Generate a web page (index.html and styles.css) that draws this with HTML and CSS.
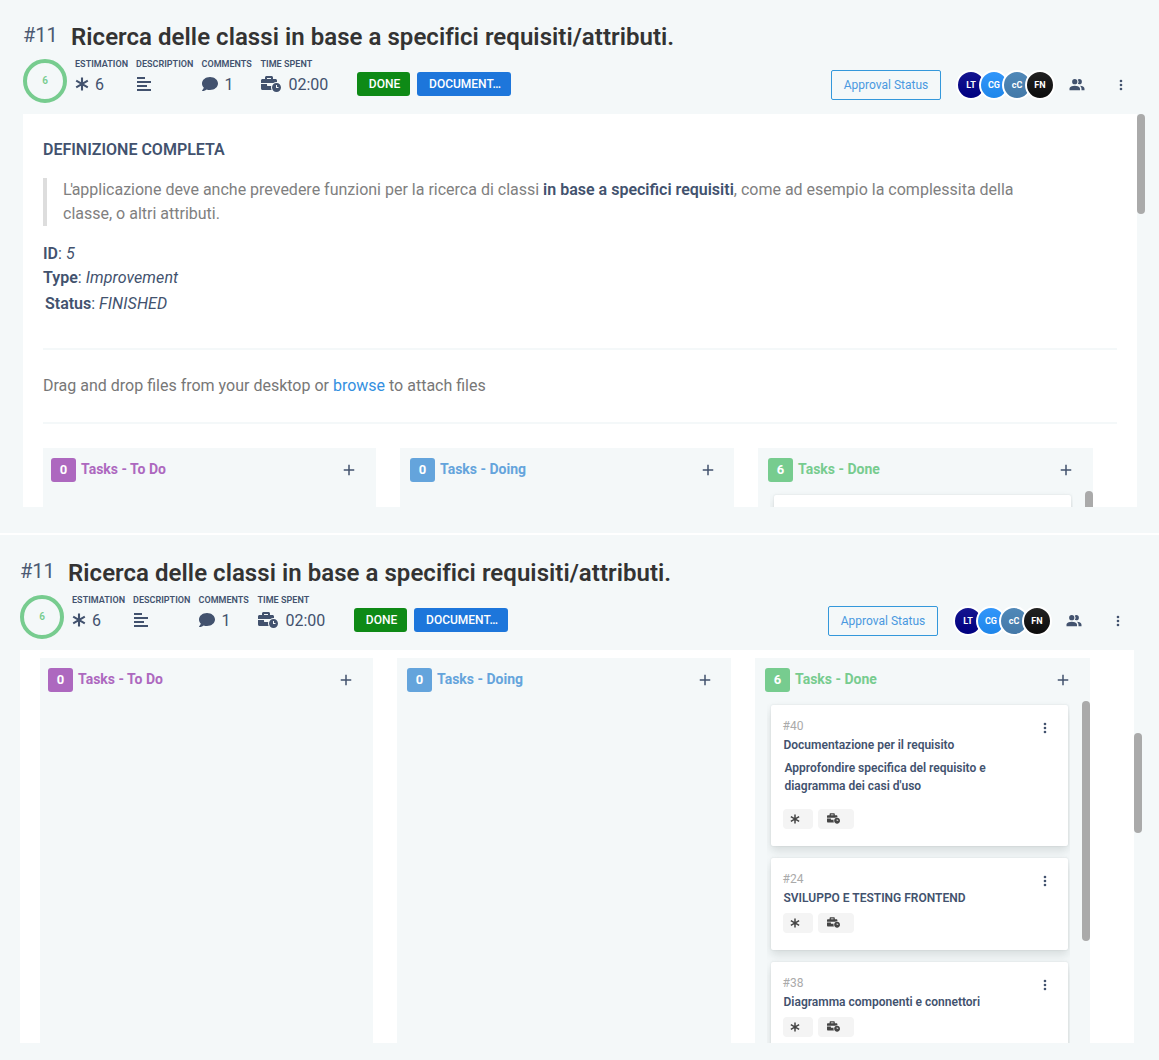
FILE: index.html
```html
<!DOCTYPE html>
<html lang="it">
<head>
<meta charset="utf-8">
<title>Ricerca delle classi in base a specifici requisiti/attributi.</title>
<link rel="stylesheet" href="styles.css">
</head>
<body>
<svg class="sprite" aria-hidden="true">
  <symbol id="i-asterisk" viewBox="0 0 14 14"><path d="M7 .6v12.8M1.2 3.7l11.6 6.6M1.2 10.3l11.6-6.6" fill="none" stroke="currentColor" stroke-width="2.1"/></symbol>
  <symbol id="i-lines" viewBox="0 0 14 14"><path d="M0 0h8v2H0zM0 4h14v2H0zM0 8h10v2H0zM0 12h14v2H0z"/></symbol>
  <symbol id="i-comment" viewBox="0 0 512 512"><path d="M256 32C114.6 32 0 125.1 0 240c0 49.6 21.4 95 57 130.7C44.5 421.1 2.7 466 2.2 466.5c-2.2 2.3-2.8 5.7-1.5 8.7S4.8 480 8 480c66.3 0 116-31.8 140.6-51.4 32.7 12.3 69 19.4 107.4 19.4 141.4 0 256-93.1 256-208S397.4 32 256 32z"/></symbol>
  <symbol id="i-time" viewBox="0 0 640 512"><path d="M496 224c-79.59 0-144 64.41-144 144s64.41 144 144 144 144-64.41 144-144-64.41-144-144-144zm64 150.29c0 5.34-4.37 9.71-9.71 9.71h-60.57c-5.34 0-9.71-4.37-9.71-9.71v-76.57c0-5.34 4.37-9.71 9.71-9.71h12.57c5.34 0 9.71 4.37 9.71 9.71V352h38.29c5.34 0 9.71 4.37 9.71 9.71v12.58zM496 192c5.4 0 10.72.33 16 .81V144c0-25.6-22.4-48-48-48h-80V48c0-25.6-22.4-48-48-48H176c-25.6 0-48 22.4-48 48v48H48c-25.6 0-48 22.4-48 48v80h395.12c28.6-20.09 63.35-32 100.88-32zM320 96H192V64h128v32zm6.82 224H208c-8.84 0-16-7.16-16-16v-48H0v144c0 25.6 22.4 48 48 48h291.43C327.1 423.96 320 396.82 320 368c0-16.66 2.48-32.72 6.82-48z"/></symbol>
  <symbol id="i-people" viewBox="0 0 24 24"><path d="M16 17V19H2V17S2 13 9 13 16 17 16 17M12.5 7.5A3.5 3.5 0 1 0 9 11A3.5 3.5 0 0 0 12.5 7.5M15.94 13A5.32 5.32 0 0 1 18 17V19H22V17S22 13.37 15.94 13M15 4A3.39 3.39 0 0 0 13.07 4.59A5 5 0 0 1 13.07 10.41A3.39 3.39 0 0 0 15 11A3.5 3.5 0 0 0 15 4Z"/></symbol>
  <symbol id="i-dots" viewBox="0 0 24 24"><path d="M12 16a2 2 0 1 1 0 4 2 2 0 0 1 0-4m0-6a2 2 0 1 1 0 4 2 2 0 0 1 0-4m0-6a2 2 0 1 1 0 4 2 2 0 0 1 0-4z"/></symbol>
  <symbol id="i-plus" viewBox="0 0 24 24"><path d="M19 13h-6v6h-2v-6H5v-2h6V5h2v6h6z"/></symbol>
</svg>

<section class="panel panel-top">
  <header class="head">
    <div class="title-row"><span class="num">#11</span><h1>Ricerca delle classi in base a specifici requisiti/attributi.</h1></div>
    <div class="info-row">
      <div class="ring">6</div>
      <dl class="stats">
        <div class="stat estimation"><dt>ESTIMATION</dt><dd><svg class="i-ast"><use href="#i-asterisk"/></svg>6</dd></div>
        <div class="stat description"><dt>DESCRIPTION</dt><dd><svg class="i-lin"><use href="#i-lines"/></svg></dd></div>
        <div class="stat comments"><dt>COMMENTS</dt><dd><svg class="i-com"><use href="#i-comment"/></svg>1</dd></div>
        <div class="stat spent"><dt>TIME SPENT</dt><dd><svg class="i-tim"><use href="#i-time"/></svg>02:00</dd></div>
      </dl>
      <div class="tags"><span class="tag done-tag">DONE</span><span class="tag doc-tag">DOCUMENT…</span></div>
      <div class="actions">
        <button class="approval">Approval Status</button>
        <div class="avatars"><span class="av lt">LT</span><span class="av cg">CG</span><span class="av cc">cC</span><span class="av fn">FN</span></div>
        <svg class="i-ppl"><use href="#i-people"/></svg>
        <svg class="i-dot"><use href="#i-dots"/></svg>
      </div>
    </div>
  </header>
  <div class="body">
    <div class="content">
      <article class="definition">
        <h2>DEFINIZIONE COMPLETA</h2>
        <blockquote><span class="elide">L'</span>applicazione deve anche prevedere funzioni per la ricerca di classi <b>in base a specifici requisiti</b>, come ad esempio la complessita della classe, o altri attributi.</blockquote>
        <p><b>ID</b>: <i>5</i></p>
        <p><b>Type</b>: <i>Improvement</i></p>
        <p class="status"><b>Status</b>: <i>FINISHED</i></p>
      </article>
      <div class="drop">Drag and drop files from your desktop or <a>browse</a> to attach files</div>
      <div class="board">
        <section class="col todo"><h3><span class="count">0</span>Tasks - To Do<svg class="i-plus"><use href="#i-plus"/></svg></h3></section>
        <section class="col doing"><h3><span class="count">0</span>Tasks - Doing<svg class="i-plus"><use href="#i-plus"/></svg></h3></section>
        <section class="col done"><h3><span class="count">6</span>Tasks - Done<svg class="i-plus"><use href="#i-plus"/></svg></h3>
          <div class="list"><div class="cards"><div class="card tall"></div></div><div class="thumb"></div></div>
        </section>
      </div>
    </div>
    <div class="track"><div class="thumb"></div></div>
  </div>
</section>

<section class="panel panel-bottom">
  <header class="head">
    <div class="title-row"><span class="num">#11</span><h1>Ricerca delle classi in base a specifici requisiti/attributi.</h1></div>
    <div class="info-row">
      <div class="ring">6</div>
      <dl class="stats">
        <div class="stat estimation"><dt>ESTIMATION</dt><dd><svg class="i-ast"><use href="#i-asterisk"/></svg>6</dd></div>
        <div class="stat description"><dt>DESCRIPTION</dt><dd><svg class="i-lin"><use href="#i-lines"/></svg></dd></div>
        <div class="stat comments"><dt>COMMENTS</dt><dd><svg class="i-com"><use href="#i-comment"/></svg>1</dd></div>
        <div class="stat spent"><dt>TIME SPENT</dt><dd><svg class="i-tim"><use href="#i-time"/></svg>02:00</dd></div>
      </dl>
      <div class="tags"><span class="tag done-tag">DONE</span><span class="tag doc-tag">DOCUMENT…</span></div>
      <div class="actions">
        <button class="approval">Approval Status</button>
        <div class="avatars"><span class="av lt">LT</span><span class="av cg">CG</span><span class="av cc">cC</span><span class="av fn">FN</span></div>
        <svg class="i-ppl"><use href="#i-people"/></svg>
        <svg class="i-dot"><use href="#i-dots"/></svg>
      </div>
    </div>
  </header>
  <div class="body">
    <div class="content">
      <div class="board">
        <section class="col todo"><h3><span class="count">0</span>Tasks - To Do<svg class="i-plus"><use href="#i-plus"/></svg></h3></section>
        <section class="col doing"><h3><span class="count">0</span>Tasks - Doing<svg class="i-plus"><use href="#i-plus"/></svg></h3></section>
        <section class="col done"><h3><span class="count">6</span>Tasks - Done<svg class="i-plus"><use href="#i-plus"/></svg></h3>
          <div class="list">
            <div class="cards">
              <div class="card tall">
                <div class="card-top"><span>#40</span><svg class="i-dot"><use href="#i-dots"/></svg></div>
                <h4>Documentazione per il requisito</h4>
                <p>Approfondire specifica del requisito e diagramma dei casi d'uso</p>
                <div class="chips"><span class="chip"><svg class="i-ast"><use href="#i-asterisk"/></svg></span><span class="chip wide"><svg class="i-tim"><use href="#i-time"/></svg></span></div>
              </div>
              <div class="card">
                <div class="card-top"><span>#24</span><svg class="i-dot"><use href="#i-dots"/></svg></div>
                <h4>SVILUPPO E TESTING FRONTEND</h4>
                <div class="chips"><span class="chip"><svg class="i-ast"><use href="#i-asterisk"/></svg></span><span class="chip wide"><svg class="i-tim"><use href="#i-time"/></svg></span></div>
              </div>
              <div class="card">
                <div class="card-top"><span>#38</span><svg class="i-dot"><use href="#i-dots"/></svg></div>
                <h4>Diagramma componenti e connettori</h4>
                <div class="chips"><span class="chip"><svg class="i-ast"><use href="#i-asterisk"/></svg></span><span class="chip wide"><svg class="i-tim"><use href="#i-time"/></svg></span></div>
              </div>
            </div>
            <div class="thumb"></div>
          </div>
        </section>
      </div>
    </div>
    <div class="track"><div class="thumb"></div></div>
  </div>
</section>
</body>
</html>
```
FILE: styles.css
```css
* { box-sizing: border-box; margin: 0; padding: 0; }
body { background: #fff; font-family: Roboto, sans-serif; color: #42526e; width: 1159px; height: 1060px; overflow: hidden; }
svg { fill: currentColor; flex: none; display: block; }
.sprite { width: 0; height: 0; position: absolute; }

.panel { background: #f4f8f9; }
.panel-top { height: 533px; margin-bottom: 2px; padding: 0 14px 0 23px; }
.panel-bottom { height: 525px; padding: 1px 17px 0 20px; }

.head { height: 114px; padding-top: 21px; }
.title-row { display: flex; height: 32px; }
.num { width: 48px; font-size: 20px; line-height: 28px; font-weight: 400; color: #4c5a72; }
h1 { font-size: 24px; line-height: 32px; font-weight: 600; letter-spacing: .045px; color: #333; }
.info-row { display: flex; height: 50px; margin-top: 6px; }
.ring { width: 44px; height: 44px; border: 4px solid #77cc8f; border-radius: 50%; color: #77cc8f; font-size: 10px; font-weight: 600; line-height: 35px; text-align: center; }
.stats { display: flex; margin-left: 8px; }
.stat dt { font-size: 9px; line-height: 10px; font-weight: 600; letter-spacing: .03px; white-space: nowrap; }
.stat dd { display: flex; align-items: center; height: 30px; font-size: 16px; font-weight: 400; }
.estimation { width: 61px; }
.description { width: 65.5px; }
.comments { width: 59px; }
.spent { width: 96.5px; }
.stat .i-ast { width: 14px; height: 14px; margin-right: 6px; }
.i-lin { width: 14px; height: 14px; margin-left: 1px; }
.i-com { width: 16px; height: 16px; margin-right: 7px; }
.stat .i-tim { width: 20px; height: 16px; margin-right: 8px; }
.tags { display: flex; gap: 7px; padding-top: 13px; }
.tag { height: 24px; border-radius: 3px; color: #fff; font-size: 12px; line-height: 24px; font-weight: 500; text-align: center; }
.done-tag { width: 53px; background: #0e8a16; padding-left: 2px; }
.doc-tag { width: 94px; background: #1d76db; padding-left: 2px; }
.actions { display: flex; margin-left: auto; padding-top: 11px; }
.actions svg { margin-top: 6px; }
.approval { width: 110px; height: 30px; border: 1px solid #3498db; border-radius: 2px; background: none; color: #4a98e0; font: 400 12px/28px Roboto, sans-serif; }
.avatars { display: flex; margin-left: 15px; }
.av { width: 30px; height: 30px; border: 2px solid #fff; border-radius: 50%; margin-right: -7px; color: #fff; font-size: 9px; font-weight: 700; line-height: 26px; text-align: center; }
.lt { background: linear-gradient(#151590, #000080); }
.cg { background: linear-gradient(#3296fa, #1e86ea); }
.cc { background: linear-gradient(#5088b8, #4479a8); }
.fn { background: linear-gradient(#222, #0c0c0c); }
.i-ppl { width: 18px; height: 18px; margin-left: 20px; }
.i-dot { width: 16px; height: 16px; }
.actions .i-dot { margin: 7px 16px 0 27px; }

.body { display: flex; height: 393px; overflow: hidden; }
.content { width: 1114px; background: #fff; padding: 0 20px; }
.track { width: 8px; }
.thumb { width: 8px; background: #aaa; border-radius: 4px; }
.track .thumb { height: 100px; }
.panel-bottom .track { padding-top: 83px; }

.definition { height: 236px; padding-top: 24px; font-size: 16px; line-height: 24px; border-bottom: 2px solid #f4f8f9; }
.definition h2 { font-size: 16px; font-weight: 600; }
.definition b { font-weight: 600; }
.definition i { font-weight: 450; letter-spacing: .1px; }
blockquote { margin: 16px 0; padding: 0 90px 0 16px; border-left: 4px solid #ddd; color: #808080; height: 48px; }
blockquote b { color: #42526e; }
.elide { letter-spacing: -1.4px; }
.status { padding: 2px 0 0 2px; }
.drop { height: 74px; line-height: 72px; font-size: 16px; color: #777; border-bottom: 2px solid #f4f8f9; }
.drop a { color: #3490e0; }

.board { display: grid; grid-template-columns: 333px 334px 335px; gap: 24px; height: 400px; }
.panel-top .board { margin-top: 24px; }
.panel-bottom .board { margin-top: 8px; }
.col { background: #f4f8f9; }
.col h3 { display: flex; height: 43px; padding: 10px 0 0 10px; font-size: 14px; line-height: 22px; font-weight: 700; }
.todo h3 { padding-left: 8px; }
.count { width: 25px; height: 24px; margin-right: 5px; border-radius: 3px; color: #fff; font-size: 13px; line-height: 24px; text-align: center; }
.todo h3 { color: #ad68bf; } .todo .count { background: #ad68bf; }
.doing h3 { color: #64a4dc; } .doing .count { background: #64a4dc; }
.done h3 { color: #77cc8f; } .done .count { background: #77cc8f; }
.i-plus { width: 18px; height: 18px; margin: 3px 17px 0 auto; color: #42526e; }
.todo .i-plus { margin-right: 18px; }
.done .i-plus { margin-right: 17.6px; }

.list { display: flex; justify-content: space-between; padding-left: 12px; }
.list .thumb { height: 240px; }
.cards { width: 303px; height: 357px; padding: 4px 2px 0 4px; overflow: hidden; }
.card { height: 92px; margin-bottom: 12px; padding: 13px 12px 0; background: #fff; border-radius: 2px; box-shadow: 0 5px 10px rgba(60, 80, 80, .16), 0 0 2px rgba(60, 80, 80, .14); color: #42526e; font-size: 12px; }
.card.tall { height: 141px; }
.card-top { display: flex; justify-content: space-between; height: 18px; line-height: 16px; color: #aaa; margin-left: -.5px; }
.card-top .i-dot { color: #42526e; margin: 2px 3px 0 0; }
.card h4 { font-size: 12px; line-height: 18px; font-weight: 600; padding-left: .5px; }
.card p { width: 230px; margin: 5px 0 8px 1.5px; font-weight: 600; line-height: 18px; }
.chips { display: flex; gap: 5px; padding-top: 6px; color: #444; }
.chip { width: 30px; height: 20px; padding: 5px 7px; border-radius: 4px; background: #f4f4f4; }
.chip.wide { width: 36px; padding: 4px 9px; }
.chip .i-ast { width: 10px; height: 10px; }
.chip .i-tim { width: 13px; height: 11px; }
```
